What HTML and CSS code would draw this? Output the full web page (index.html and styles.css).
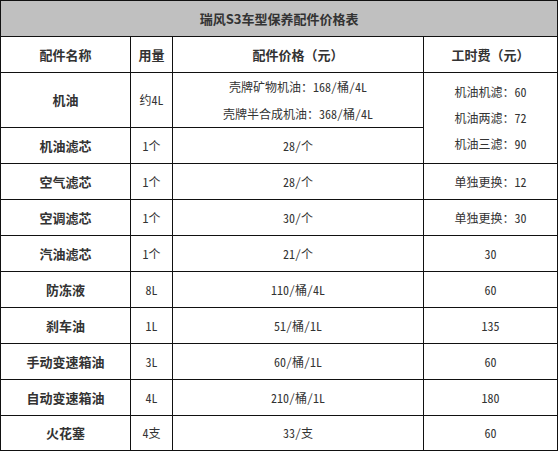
FILE: index.html
```html
<!DOCTYPE html>
<html lang="zh-CN">
<head>
<meta charset="utf-8">
<title>瑞风S3车型保养配件价格表</title>
<link rel="stylesheet" href="styles.css">
</head>
<body>
<table class="price">
  <colgroup>
    <col class="c1"><col class="c2"><col class="c3"><col class="c4">
  </colgroup>
  <tr class="title-row"><td colspan="4" class="title">瑞风S3车型保养配件价格表</td></tr>
  <tr class="head"><th>配件名称</th><th>用量</th><th>配件价格（元）</th><th>工时费（元）</th></tr>
  <tr class="tall">
    <td class="name">机油</td><td>约4L</td>
    <td class="multi"><div>壳牌矿物机油：168/桶/4L</div><div>壳牌半合成机油：368/桶/4L</div></td>
    <td rowspan="2" class="multi3"><div>机油机滤：60</div><div>机油两滤：72</div><div>机油三滤：90</div></td>
  </tr>
  <tr><td class="name">机油滤芯</td><td>1个</td><td>28/个</td></tr>
  <tr><td class="name">空气滤芯</td><td>1个</td><td>28/个</td><td>单独更换：12</td></tr>
  <tr><td class="name">空调滤芯</td><td>1个</td><td>30/个</td><td>单独更换：30</td></tr>
  <tr><td class="name">汽油滤芯</td><td>1个</td><td>21/个</td><td>30</td></tr>
  <tr><td class="name">防冻液</td><td>8L</td><td>110/桶/4L</td><td>60</td></tr>
  <tr><td class="name">刹车油</td><td>1L</td><td>51/桶/1L</td><td>135</td></tr>
  <tr><td class="name">手动变速箱油</td><td>3L</td><td>60/桶/1L</td><td>60</td></tr>
  <tr><td class="name">自动变速箱油</td><td>4L</td><td>210/桶/1L</td><td>180</td></tr>
  <tr class="last"><td class="name">火花塞</td><td>4支</td><td>33/支</td><td>60</td></tr>
</table>
</body>
</html>
```
FILE: styles.css
```css
html, body {
  margin: 0;
  padding: 0;
  background: #ffffff;
}
.price {
  border-collapse: collapse;
  table-layout: fixed;
  width: 557px;
  font-family: "Noto Sans Mono CJK SC", "Noto Sans CJK SC", sans-serif;
  font-size: 12px;
  color: #333333;
}
.c1 { width: 130px; }
.c2 { width: 42px; }
.c3 { width: 251px; }
.c4 { width: 134px; }
.price td, .price th {
  border: 1px solid #111111;
  padding: 0;
  height: 35px;
  text-align: center;
  vertical-align: middle;
  line-height: 16px;
}
.price th, .price .name, .price .title {
  font-family: "Noto Sans CJK SC", sans-serif;
  font-weight: bold;
  font-size: 13px;
}
.title-row td {
  background: #c0c0c0;
}
.tall td {
  height: 53px;
}
.multi div {
  line-height: 27px;
}
.multi3 div {
  line-height: 26px;
}
.last td {
  height: 34px;
}
```
